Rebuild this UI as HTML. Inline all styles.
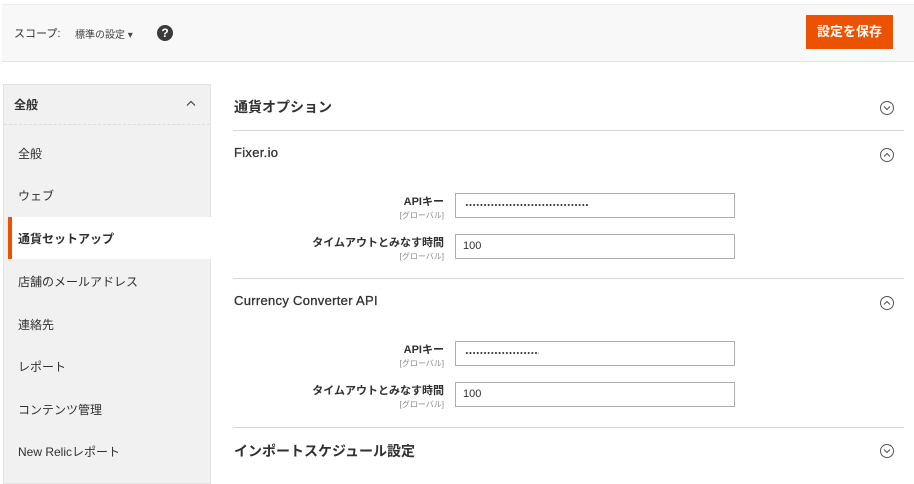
<!DOCTYPE html>
<html><head><meta charset="utf-8"><style>
*{margin:0;padding:0;box-sizing:border-box}
body{width:914px;height:474px;overflow:hidden;background:#fff;font-family:"Liberation Sans","Noto Sans CJK JP",sans-serif;color:#303030;position:relative}
.hdr{position:absolute;left:2px;top:4px;width:912px;height:58px;background:#f8f8f8;border-top:1px solid #eee;border-bottom:1px solid #e3e3e3}
.abs{position:absolute;white-space:nowrap}
.btn{position:absolute;left:806px;top:15px;width:87px;height:34px;background:#eb5202;color:#fff;font-size:13px;font-weight:bold;text-align:center;line-height:34px}
.side{position:absolute;left:3px;top:84px;width:208px;height:400px;background:#f1f1f1;border:1px solid #e3e3e3}
.item{position:absolute;left:18px;font-size:12px;color:#303030}
.active{position:absolute;left:8px;top:217px;width:203px;height:42px;background:#fff;border-left:4px solid #eb5202}
.line{position:absolute;left:233px;width:671px;height:1px;background:#d6d6d6}
.h{position:absolute;left:234px;font-size:14px;font-weight:bold;color:#303030}
.circ{position:absolute;left:880px;width:14px;height:14px;border:1px solid #555;border-radius:50%}
.circ svg{position:absolute;left:2px;top:3px}
.lab{position:absolute;right:470px;text-align:right;font-size:11px;font-weight:bold;color:#303030}
.lab small{display:block;font-size:8px;font-weight:normal;color:#888;margin-top:1px}
.inp{position:absolute;left:455px;width:280px;height:25px;border:1px solid #adadad;font-size:11px;line-height:23px;padding-left:7px;color:#303030}
.dots{position:absolute;left:9px;top:9px;height:4px;background-image:radial-gradient(circle,#333 0.8px,transparent 1.2px);background-size:3.65px 4px}
</style></head><body>
<div class="hdr"></div>
<div class="abs" style="left:14px;top:25px;font-size:11px">スコープ:</div>
<div class="abs" style="left:75px;top:26px;font-size:10px;color:#444">標準の設定 ▾</div>
<div class="abs" style="left:157px;top:25px;width:16px;height:16px;border-radius:50%;background:#3a3a3a;color:#fff;font-size:12px;font-weight:bold;text-align:center;line-height:16px">?</div>
<div class="btn">設定を保存</div>

<div class="side"></div>
<div class="abs" style="left:4px;top:124px;width:206px;border-top:1px dashed #dcdcdc"></div>
<div class="item" style="left:14px;top:96px;font-weight:bold">全般</div>
<svg class="abs" style="left:186px;top:100px" width="10" height="6"><path d="M1 5.5L5 1.5L9 5.5" fill="none" stroke="#444" stroke-width="1.2"/></svg>
<div class="item" style="top:145px">全般</div>
<div class="item" style="top:187px">ウェブ</div>
<div class="active"></div>
<div class="item" style="top:230px;font-weight:bold">通貨セットアップ</div>
<div class="item" style="top:273px">店舗のメールアドレス</div>
<div class="item" style="top:316px">連絡先</div>
<div class="item" style="top:358px">レポート</div>
<div class="item" style="top:401px">コンテンツ管理</div>
<div class="item" style="top:443px">New Relicレポート</div>

<div class="h" style="top:97px">通貨オプション</div>
<div class="circ" style="top:101px"><svg width="8" height="6"><path d="M1 1.5L4 4.5L7 1.5" fill="none" stroke="#555" stroke-width="1.1"/></svg></div>
<div class="line" style="top:130px"></div>
<div class="h" style="top:145px;font-size:13px;font-weight:normal;letter-spacing:0.3px;-webkit-text-stroke:0.3px #303030">Fixer.io</div>
<div class="circ" style="top:148px"><svg width="8" height="6"><path d="M1 4.5L4 1.5L7 4.5" fill="none" stroke="#555" stroke-width="1.1"/></svg></div>
<div class="lab" style="top:193px">APIキー<small>[グローバル]</small></div>
<div class="inp" style="top:193px"><div class="dots" style="width:124px"></div></div>
<div class="lab" style="top:234px">タイムアウトとみなす時間<small>[グローバル]</small></div>
<div class="inp" style="top:234px">100</div>
<div class="line" style="top:278px"></div>
<div class="h" style="top:293px;font-size:13px;font-weight:normal;letter-spacing:0.3px;-webkit-text-stroke:0.3px #303030">Currency Converter API</div>
<div class="circ" style="top:296px"><svg width="8" height="6"><path d="M1 4.5L4 1.5L7 4.5" fill="none" stroke="#555" stroke-width="1.1"/></svg></div>
<div class="lab" style="top:341px">APIキー<small>[グローバル]</small></div>
<div class="inp" style="top:341px"><div class="dots" style="width:74px"></div></div>
<div class="lab" style="top:382px">タイムアウトとみなす時間<small>[グローバル]</small></div>
<div class="inp" style="top:382px">100</div>
<div class="line" style="top:427px"></div>
<div class="h" style="top:441px">インポートスケジュール設定</div>
<div class="circ" style="top:444px"><svg width="8" height="6"><path d="M1 1.5L4 4.5L7 1.5" fill="none" stroke="#555" stroke-width="1.1"/></svg></div>
</body></html>
